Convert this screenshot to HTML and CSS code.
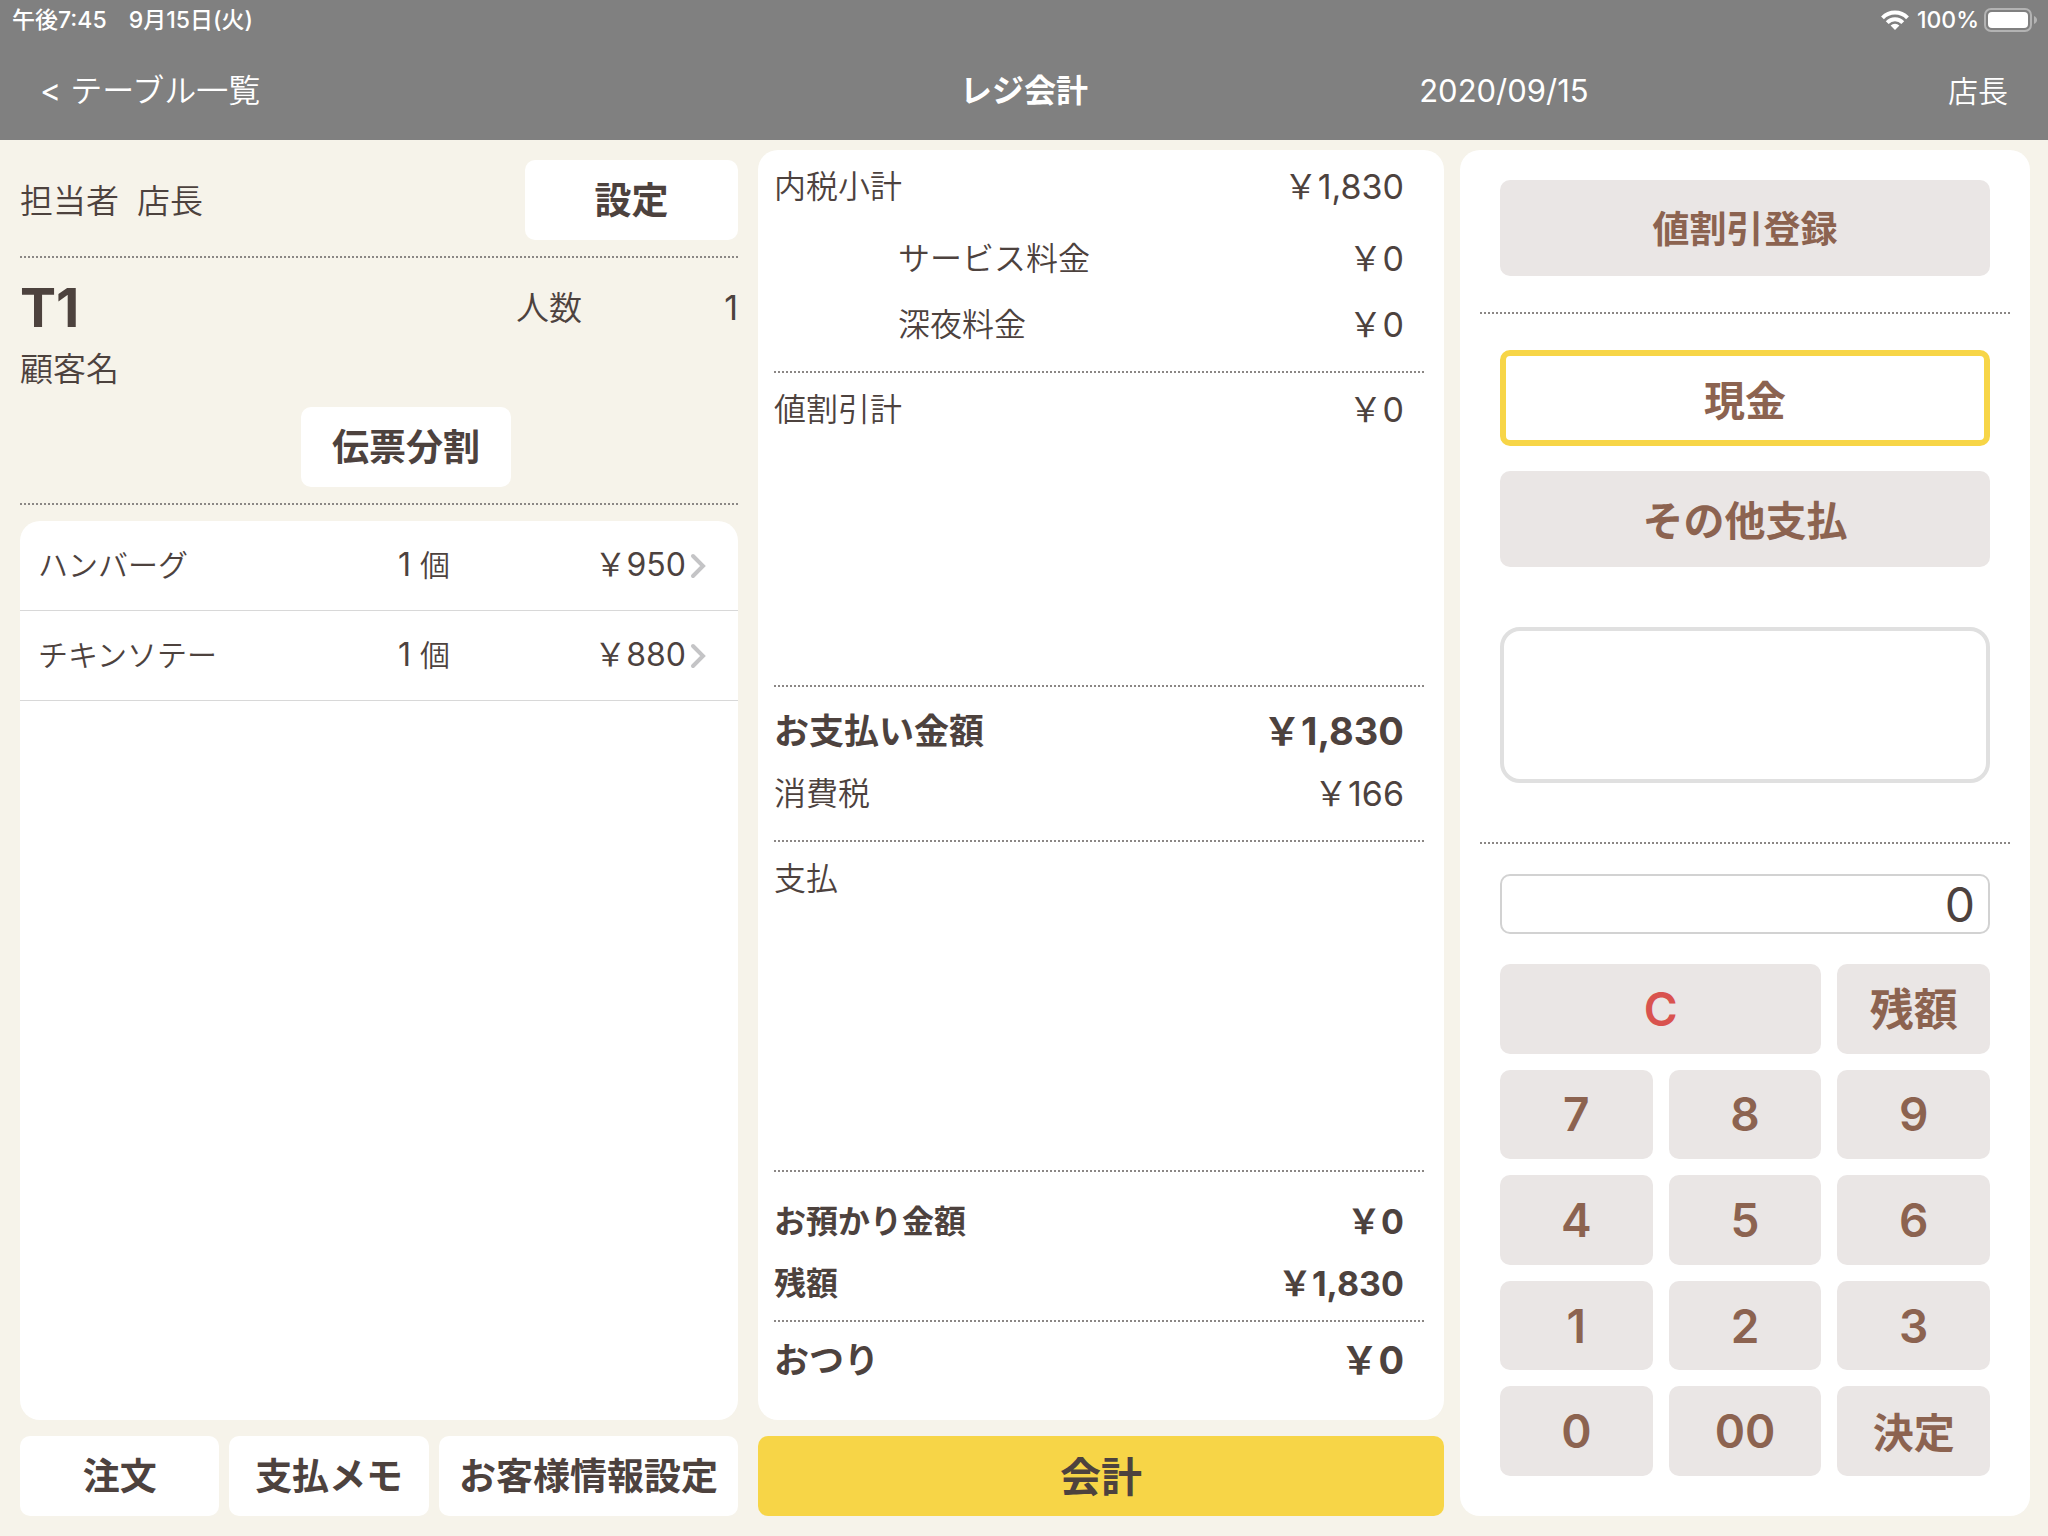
FILE: index.html
```html
<!DOCTYPE html>
<html lang="ja">
<head>
<meta charset="utf-8">
<meta name="viewport" content="width=device-width, initial-scale=1">
<title>レジ会計</title>
<link rel="stylesheet" href="styles.css">
</head>
<body>
<header class="header">
  <div class="status">
    <div class="status-left"><span>午後7:45</span><span>9月15日(火)</span></div>
    <div class="status-right">
      <svg class="wifi" viewBox="0 0 28 20" aria-hidden="true">
        <path fill="none" stroke="#fff" stroke-width="4" d="M1.500 7.800a17.600 17.600 0 0 1 25 0M6.200 12.600a11 11 0 0 1 15.600 0"/>
        <path fill="#fff" d="M14 20l4.400-4.500a6.400 6.400 0 0 0-8.800 0z"/>
      </svg>
      <span>100%</span>
      <svg class="battery" viewBox="0 0 54 24" aria-hidden="true">
        <rect x="1" y="1" width="46" height="22" rx="6" fill="none" stroke="#b3b3b3" stroke-width="2"/>
        <rect x="4" y="4" width="40" height="16" rx="4" fill="#fff"/>
        <path fill="#b3b3b3" d="M50 8c4 1.500 4 6.500 0 8z"/>
      </svg>
    </div>
  </div>
  <nav class="navbar">
    <a class="back" href="#tables"><span class="back-mark">&lt;</span> テーブル一覧</a>
    <h1 class="title">レジ会計</h1>
    <div class="nav-right"><span class="date">2020/09/15</span><span class="user">店長</span></div>
  </nav>
</header>

<main class="main">
  <section class="order">
    <div class="staff">
      <p class="staff-name"><span>担当者</span><span>店長</span></p>
      <button class="btn btn-set" type="button">設定</button>
    </div>
    <div class="slip">
      <div class="slip-head">
        <h2 class="table-name">T1</h2>
        <p class="guests"><span>人数</span><span class="guest-count">1</span></p>
      </div>
      <p class="customer">顧客名</p>
      <button class="btn btn-split" type="button">伝票分割</button>
    </div>
    <ul class="items">
      <li><a class="item" href="#item-1"><span class="item-name">ハンバーグ</span><span class="item-qty">1 <span class="unit">個</span></span><span class="item-price">￥950</span><svg class="chevron" viewBox="0 0 16 26" aria-hidden="true"><path d="M3 3l10 10-10 10"/></svg></a></li>
      <li><a class="item" href="#item-2"><span class="item-name">チキンソテー</span><span class="item-qty">1 <span class="unit">個</span></span><span class="item-price">￥880</span><svg class="chevron" viewBox="0 0 16 26" aria-hidden="true"><path d="M3 3l10 10-10 10"/></svg></a></li>
    </ul>
    <div class="actions">
      <button class="btn" type="button">注文</button>
      <button class="btn" type="button">支払メモ</button>
      <button class="btn" type="button">お客様情報設定</button>
    </div>
  </section>

  <section class="bill">
    <div class="card summary">
      <dl class="group subtotal">
        <div class="line"><dt>内税小計</dt><dd>￥1,830</dd></div>
        <div class="line sub"><dt>サービス料金</dt><dd>￥0</dd></div>
        <div class="line sub"><dt>深夜料金</dt><dd>￥0</dd></div>
      </dl>
      <dl class="group discount">
        <div class="line"><dt>値割引計</dt><dd>￥0</dd></div>
      </dl>
      <dl class="group due">
        <div class="line total"><dt>お支払い金額</dt><dd>￥1,830</dd></div>
        <div class="line"><dt>消費税</dt><dd>￥166</dd></div>
      </dl>
      <dl class="group payments">
        <div class="line"><dt>支払</dt><dd></dd></div>
      </dl>
      <dl class="group received">
        <div class="line strong"><dt>お預かり金額</dt><dd>￥0</dd></div>
        <div class="line strong"><dt>残額</dt><dd>￥1,830</dd></div>
      </dl>
      <dl class="group change">
        <div class="line total"><dt>おつり</dt><dd>￥0</dd></div>
      </dl>
    </div>
    <button class="btn btn-checkout" type="button">会計</button>
  </section>

  <section class="card register">
    <div class="block discount-entry">
      <button class="key key-discount" type="button">値割引登録</button>
    </div>
    <div class="block methods">
      <button class="key key-method selected" type="button">現金</button>
      <button class="key key-method" type="button">その他支払</button>
      <div class="note"></div>
    </div>
    <div class="block entry">
      <input class="amount" type="text" inputmode="numeric" value="0" aria-label="金額">
      <div class="keypad">
        <button class="key key-clear" type="button">C</button>
        <button class="key key-rest" type="button">残額</button>
        <button class="key" type="button">7</button>
        <button class="key" type="button">8</button>
        <button class="key" type="button">9</button>
        <button class="key" type="button">4</button>
        <button class="key" type="button">5</button>
        <button class="key" type="button">6</button>
        <button class="key" type="button">1</button>
        <button class="key" type="button">2</button>
        <button class="key" type="button">3</button>
        <button class="key" type="button">0</button>
        <button class="key" type="button">00</button>
        <button class="key key-enter" type="button">決定</button>
      </div>
    </div>
  </section>
</main>
</body>
</html>
```
FILE: styles.css
```css
:root {
  --bg: #f6f3ea;
  --ink: #4d423e;
  --brown: #8c6350;
  --key: #eae6e5;
  --yellow: #f7d547;
  --dots: repeating-linear-gradient(90deg, #8b8785 0 2px, transparent 2px 4px);
}

* { box-sizing: border-box; }

body {
  margin: 0;
  min-height: 100vh;
  display: flex;
  flex-direction: column;
  background: var(--bg);
  color: var(--ink);
  font-family: Inter, "Noto Sans CJK JP", sans-serif;
  font-size: 32px;
  font-weight: 350;
  line-height: 40px;
}

h1, h2, p, ul, dl, dd { margin: 0; padding: 0; }
ul { list-style: none; }
a { color: inherit; text-decoration: none; }

button, input { font-family: inherit; color: inherit; margin: 0; }

/* header */
.header { background: #808080; color: #fff; height: 140px; }

.status {
  display: flex;
  justify-content: space-between;
  height: 40px;
  padding: 0 10px 0 12px;
  font-size: 23px;
  font-weight: 500;
}
.status-left { display: flex; gap: 22px; }
.status-right { display: flex; align-items: center; gap: 5px; }
.wifi { width: 28px; height: 20px; margin-right: 3px; }
.battery { width: 54px; height: 24px; }

.navbar {
  display: grid;
  grid-template-columns: 1fr auto 1fr;
  align-items: center;
  height: 100px;
  padding: 2px 40px 0;
}
.back-mark { font-weight: 400; }
.title { font-size: 32px; font-weight: 700; }
.nav-right { display: flex; justify-content: space-between; padding-left: 36%; }
.date { font-size: 31px; font-weight: 400; }
.user { font-size: 30px; }

/* columns */
.main {
  flex: 1;
  display: grid;
  grid-template-columns: 722fr 686fr 570fr;
  column-gap: 16px;
  padding: 10px 18px 20px 20px;
}
.card { background: #fff; border-radius: 20px; }

.btn {
  height: 80px;
  padding: 0 0 4px;
  border: 0;
  border-radius: 10px;
  background: #fff;
  font-size: 37px;
  font-weight: 700;
}

/* order column */
.order { display: flex; flex-direction: column; padding: 10px 4px 0 0; }
.staff, .slip {
  background: var(--dots) left bottom / 100% 2px no-repeat;
}
.staff {
  display: flex;
  justify-content: space-between;
  font-size: 33px;
  padding-bottom: 16px;
}
.staff-name { display: flex; gap: 18px; line-height: 82px; }
.btn-set { width: 213px; }

.slip {
  display: flex;
  flex-direction: column;
  padding: 20px 0 18px;
  font-size: 33px;
}
.slip-head { display: flex; justify-content: space-between; align-items: center; }
.table-name { font-size: 54px; line-height: 60px; font-weight: 700; }
.guests { display: flex; justify-content: space-between; width: 222px; }
.guest-count { font-size: 34px; font-weight: 400; }
.customer { line-height: 62px; }
.btn-split { width: 210px; align-self: center; margin: 7px 0 0 54px; }

.items {
  flex: 1;
  margin: 16px 0;
  background: #fff;
  border-radius: 20px;
}
.item {
  display: flex;
  align-items: center;
  height: 90px;
  padding: 0 32px 2px 18px;
  border-bottom: 1px solid #d8d8d8;
}
.item-name { flex: 1; font-size: 30px; }
.unit { font-size: 30px; font-weight: 350; }
.item-qty { width: 150px; font-weight: 400; }
.item-price { width: 138px; text-align: right; font-weight: 400; }
.chevron {
  width: 16px;
  height: 26px;
  margin: 2px 0 0 4px;
  fill: none;
  stroke: #c4c4c6;
  stroke-width: 4;
  stroke-linecap: round;
}

.actions { display: grid; grid-template-columns: 2fr 2fr 3fr; gap: 10px; }

/* bill column */
.bill { display: flex; flex-direction: column; gap: 16px; }
.summary { flex: 1; display: flex; flex-direction: column; padding: 0 18px 0 16px; }
.group {
  display: flex;
  flex-direction: column;
  background: var(--dots) left bottom / 100% 2px no-repeat;
}
.line { display: flex; justify-content: space-between; align-items: center; padding-right: 22px; }
.line dd { font-size: 34px; font-weight: 400; }
.sub { padding-left: 124px; }
.total { font-size: 35px; font-weight: 700; }
.total dd { font-size: 38px; font-weight: 700; }
.strong, .strong dd { font-weight: 700; }

.subtotal { padding: 17px 0 28px; gap: 26px; }
.subtotal .line:first-child { margin-bottom: 6px; }
.discount { flex: 1 1 313px; padding-top: 17px; }
.due { padding: 24px 0 28px; gap: 23px; }
.payments { flex: 1 1 329px; padding-top: 17px; }
.received { padding: 30px 0 18px; gap: 22px; }
.change { padding: 18px 0 40px; background: none; }

.btn-checkout { background: var(--yellow); font-size: 41px; }

/* register column */
.register { display: flex; flex-direction: column; padding: 0 20px; }
.block {
  display: flex;
  flex-direction: column;
  padding: 30px 20px 38px;
  background: var(--dots) left bottom / 100% 2px no-repeat;
}
.key {
  padding: 0;
  border: 0;
  border-radius: 10px;
  background: var(--key);
  color: var(--brown);
  font-size: 46px;
  font-weight: 600;
}
.key-discount { height: 96px; padding-bottom: 3px; font-size: 37px; }
.key-method { height: 96px; padding-bottom: 3px; font-size: 41px; }
.selected { background: #fff; border: 6px solid var(--yellow); padding-bottom: 0; }

.methods { gap: 25px; padding: 36px 20px 61px; }
.note { height: 156px; margin-top: 35px; border: 4px solid #e0e0e0; border-radius: 20px; }

.entry { flex: 1; padding: 30px 20px 40px; gap: 30px; background: none; }
.amount {
  width: 100%;
  height: 60px;
  padding: 0 13px;
  border: 2px solid #d2d2d2;
  border-radius: 10px;
  background: #fff;
  font-size: 48px;
  font-weight: 400;
  text-align: right;
}
.keypad {
  flex: 1;
  display: grid;
  grid-template-columns: repeat(3, 1fr);
  grid-auto-rows: 1fr;
  gap: 16px;
}
.key-clear { grid-column: span 2; color: #d9534f; }
.key-rest { padding-bottom: 3px; font-size: 44px; }
.key-enter { padding-bottom: 3px; font-size: 41px; }
```
